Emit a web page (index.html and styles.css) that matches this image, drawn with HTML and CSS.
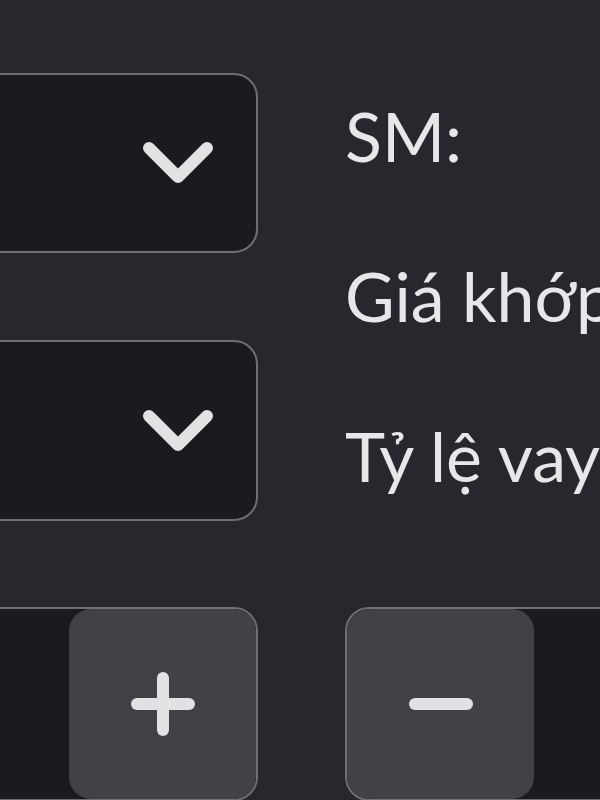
FILE: index.html
```html
<!DOCTYPE html>
<html lang="vi">
<head>
    <meta charset="UTF-8">
    <meta name="viewport" content="width=device-width, initial-scale=1.0">
    <title>Đặt lệnh</title>
    <link rel="stylesheet" href="styles.css">
</head>
<body>
    <main class="order-form">
        <div class="fields">
            <div class="selects">
                <button class="select" type="button">
                    <svg class="chevron" viewBox="0 0 72 46" width="72" height="46">
                        <polyline points="7,8 36,37 65,8" />
                    </svg>
                </button>
                <button class="select" type="button">
                    <svg class="chevron" viewBox="0 0 72 46" width="72" height="46">
                        <polyline points="7,8 36,37 65,8" />
                    </svg>
                </button>
            </div>
            <ul class="info">
                <li>SM:</li>
                <li>Giá khớp</li>
                <li>Tỷ lệ vay</li>
            </ul>
        </div>
        <div class="steppers">
            <div class="stepper stepper-left">
                <button class="step-btn" type="button">
                    <svg viewBox="0 0 64 64" width="64" height="64">
                        <line x1="32" y1="6" x2="32" y2="58" />
                        <line x1="6" y1="32" x2="58" y2="32" />
                    </svg>
                </button>
            </div>
            <div class="stepper stepper-right">
                <button class="step-btn" type="button">
                    <svg viewBox="0 0 64 64" width="64" height="64">
                        <line x1="6" y1="32" x2="58" y2="32" />
                    </svg>
                </button>
            </div>
        </div>
    </main>
</body>
</html>
```

FILE: styles.css
```css
:root {
    --bg-color: #29272d;
    --field-color: #1b1a1e;
    --button-color: #434047;
    --border-color: #6f6e74;
    --text-color: #e7e6e9;
    --icon-color: #e2e1e4;
}

* {
    margin: 0;
    padding: 0;
    box-sizing: border-box;
}

body {
    background-color: var(--bg-color);
    color: var(--text-color);
    font-family: 'Lato', 'Noto Sans', sans-serif;
    overflow: hidden;
    height: 800px;
}

.order-form {
    width: 885px;
    margin-left: -120px;
    padding-top: 73px;
}

.fields,
.steppers {
    display: grid;
    grid-template-columns: 378px 420px;
    column-gap: 87px;
}

.selects {
    display: flex;
    flex-direction: column;
    gap: 87px;
}

.select {
    display: flex;
    align-items: center;
    justify-content: flex-end;
    height: 180px;
    padding-right: 42px;
    background-color: var(--field-color);
    border: 2px solid var(--border-color);
    border-radius: 24px;
}

.select + .select {
    height: 181px;
}

.chevron polyline {
    fill: none;
    stroke: var(--icon-color);
    stroke-width: 12;
    stroke-linecap: round;
    stroke-linejoin: round;
}

.info {
    list-style: none;
    display: flex;
    flex-direction: column;
    gap: 34px;
    font-size: 68px;
    line-height: 126px;
    white-space: nowrap;
}

.steppers {
    margin-top: 86px;
}

.stepper {
    display: flex;
    height: 194px;
    background-color: var(--field-color);
    border: 2px solid var(--border-color);
    border-radius: 24px;
    overflow: hidden;
}

.stepper-left {
    justify-content: flex-end;
}

.step-btn {
    display: flex;
    align-items: center;
    justify-content: center;
    width: 187px;
    height: 100%;
    background-color: var(--button-color);
    border: none;
    border-radius: 22px;
}

.step-btn line {
    stroke: var(--icon-color);
    stroke-width: 12;
    stroke-linecap: round;
}
```
